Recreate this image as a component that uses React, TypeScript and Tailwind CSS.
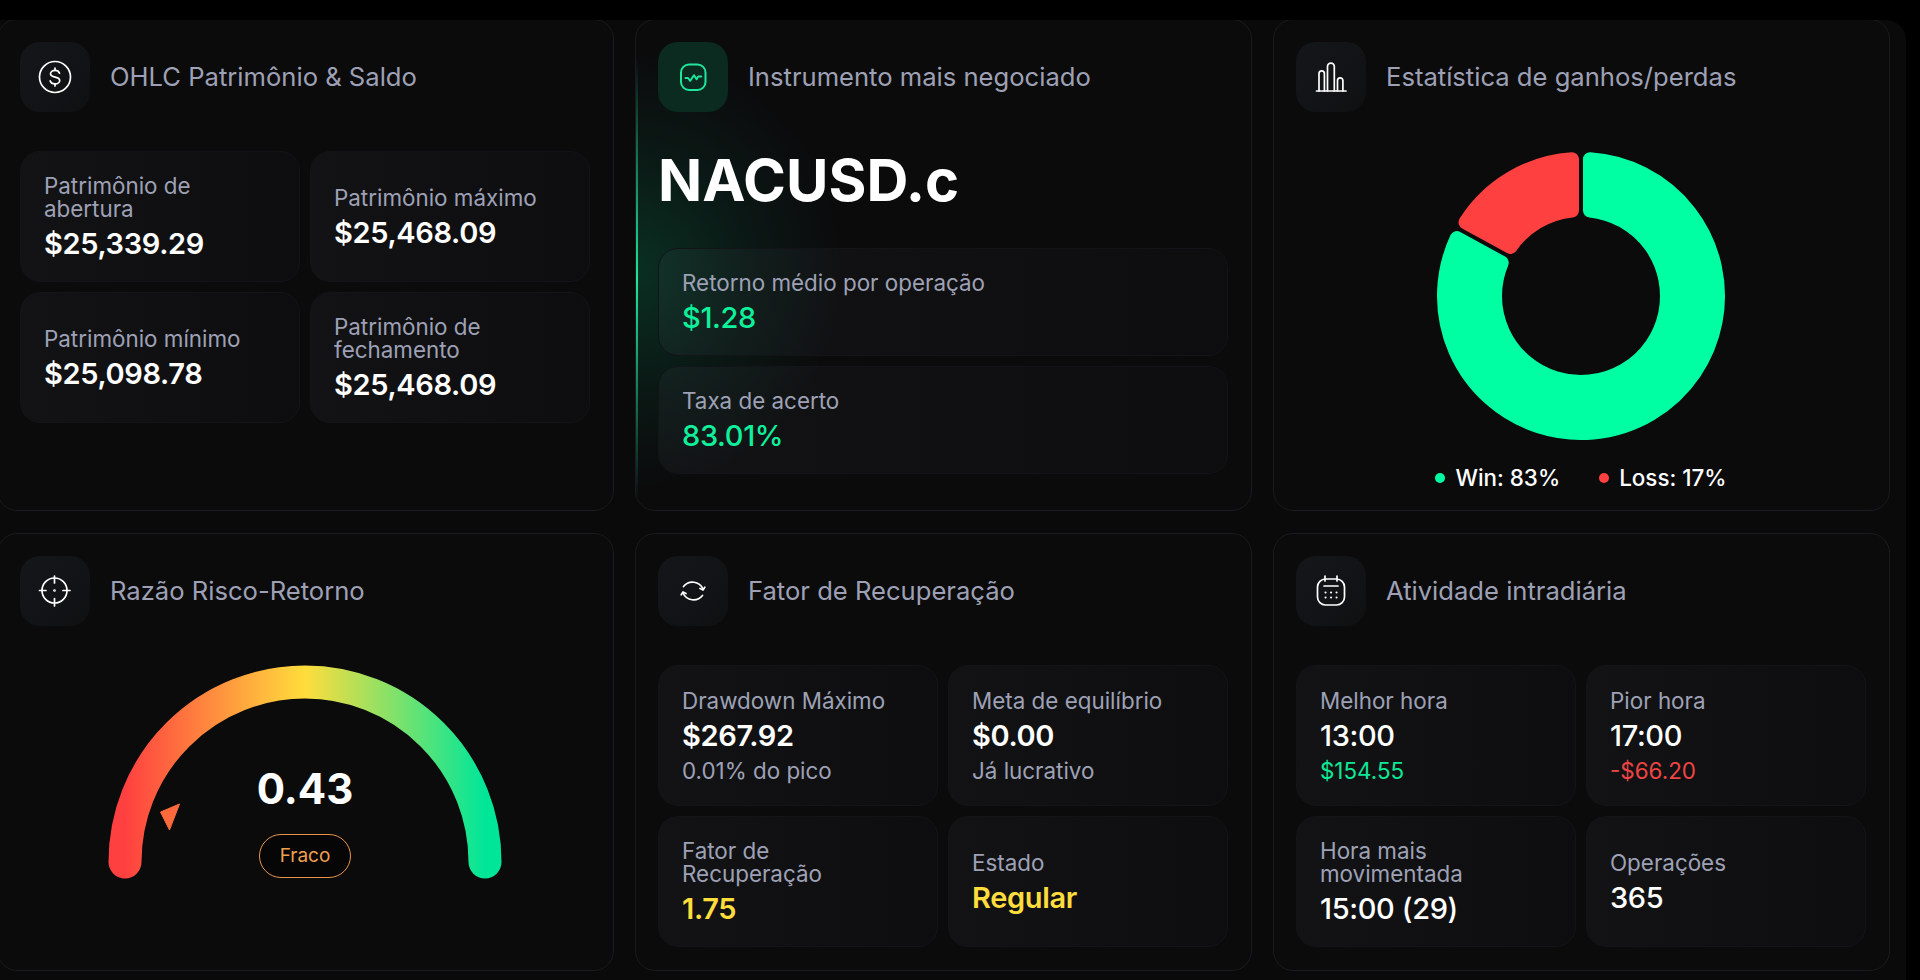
import type { ReactNode } from "react";

const FONT = "font-['Inter','Noto_Sans',sans-serif]";

function polar(r: number, deg: number) {
  const a = (deg * Math.PI) / 180;
  return `${145 + r * Math.sin(a)} ${145 - r * Math.cos(a)}`;
}

// annular slice, inset so the round stroke gives it soft corners
function slice(from: number, to: number) {
  const outer = 137;
  const inner = 86;
  const inset = 9;
  const oa = (Math.asin(inset / outer) * 180) / Math.PI;
  const ia = (Math.asin(inset / inner) * 180) / Math.PI;
  const large = to - from > 180 ? 1 : 0;
  return [
    `M ${polar(outer, from + oa)}`,
    `A ${outer} ${outer} 0 ${large} 1 ${polar(outer, to - oa)}`,
    `L ${polar(inner, to - ia)}`,
    `A ${inner} ${inner} 0 ${large} 0 ${polar(inner, from + ia)}`,
    "Z",
  ].join(" ");
}

function IconSvg({ children, color = "#ffffff" }: { children: ReactNode; color?: string }) {
  return (
    <svg
      width="70"
      height="70"
      viewBox="0 0 70 70"
      fill="none"
      stroke={color}
      strokeWidth="1.7"
      strokeLinecap="round"
      strokeLinejoin="round"
    >
      {children}
    </svg>
  );
}

function DollarIcon() {
  return (
    <IconSvg>
      <circle cx="35" cy="35" r="15.5" />
      <path d="M39.5 31.2c-.6-1.8-2.4-2.9-4.5-2.9-2.5 0-4.5 1.5-4.5 3.5 0 4.6 9.2 2.2 9.2 6.6 0 2-2 3.5-4.7 3.5-2.3 0-4.2-1.1-4.8-3" />
      <path d="M35 26v2.3M35 41.9V44" />
    </IconSvg>
  );
}

function ActivityIcon() {
  return (
    <IconSvg color="#1fe69c">
      <rect x="23" y="22.5" width="24.5" height="25.5" rx="8" strokeWidth="2" />
      <path d="M27.5 36h2.5l2.2 2.8L36 33.2l2.6 4 1.6-2.6h3" strokeWidth="2" />
    </IconSvg>
  );
}

function BarsIcon() {
  return (
    <IconSvg>
      <path d="M20.5 49h29.5" />
      <path d="M23 49V31.5a2.7 2.7 0 0 1 5.4 0V49" />
      <path d="M31.5 49V24.5a3.4 3.4 0 0 1 6.8 0V49" />
      <path d="M41.5 49V38.5a2.7 2.7 0 0 1 5.4 0V49" />
    </IconSvg>
  );
}

function TargetIcon() {
  return (
    <IconSvg>
      <circle cx="34.5" cy="34.5" r="12.5" />
      <path d="M34.5 20v7M34.5 42.5v7.5M19.5 34.5h6.5M43 34.5h7" />
      <circle cx="34.5" cy="34.5" r="0.5" />
    </IconSvg>
  );
}

function RefreshIcon() {
  return (
    <IconSvg>
      <path d="M25.5 30.5a11.5 11.5 0 0 1 19.5 2.5" />
      <path d="M44.5 39.5a11.5 11.5 0 0 1-19.5-2.5" />
      <path d="M42 32.5l3 1.5 1.8-2.8" />
      <path d="M28 37.5L25 36l-1.8 2.8" />
    </IconSvg>
  );
}

function CalendarIcon() {
  return (
    <IconSvg>
      <rect x="21.5" y="23" width="27" height="26" rx="8" />
      <path d="M29 20v5M41 20v5M28 30h14" />
      <path d="M29.5 36.5h.1M35 36.5h.1M40.5 36.5h.1M29.5 41.5h.1M35 41.5h.1M40.5 41.5h.1" strokeWidth="2" />
    </IconSvg>
  );
}

function CardHeader({ icon, title, active }: { icon: ReactNode; title: string; active?: boolean }) {
  return (
    <div className="flex items-center gap-[20px]">
      <div
        className={`h-[70px] w-[70px] shrink-0 rounded-[20px] ${
          active ? "bg-[#0b2a20]" : "bg-gradient-to-br from-[#14171a] to-[#0f1012]"
        }`}
      >
        {icon}
      </div>
      <h2 className="text-[25.6px] font-normal text-[#9ea1b5]">{title}</h2>
    </div>
  );
}

function Stat({
  label,
  value,
  note,
  valueColor = "text-white",
  noteColor = "text-[#9ea1b5]",
  valueWeight = "font-semibold",
}: {
  label: ReactNode;
  value: string;
  note?: string;
  valueColor?: string;
  noteColor?: string;
  valueWeight?: string;
}) {
  return (
    <div className="flex min-w-0 flex-col justify-center rounded-[20px] border border-[#131418] bg-gradient-to-r from-[#c8d0ff0a] to-[#c8d0ff03] px-[23px] pt-[3px]">
      <div className="text-[22.4px] leading-[23px] text-[#9ea1b5]">{label}</div>
      <div className={`mt-[5px] text-[29px] leading-[37px] tracking-[-0.35px] ${valueWeight} ${valueColor}`}>{value}</div>
      {note && <div className={`mt-[3px] text-[22.4px] leading-[28px] ${noteColor}`}>{note}</div>}
    </div>
  );
}

const cardClass = "rounded-[20px] border border-[#1a1b1e] bg-[#0b0b0c] py-[22px] pl-[22px] pr-[23px]";

function OhlcCard() {
  return (
    <section className={cardClass}>
      <CardHeader icon={<DollarIcon />} title="OHLC Patrimônio & Saldo" />
      <div className="mt-[39px] grid grid-cols-2 grid-rows-[131px_131px] gap-[10px]">
        <Stat label={<>Patrimônio de<br />abertura</>} value="$25,339.29" />
        <Stat label="Patrimônio máximo" value="$25,468.09" />
        <Stat label="Patrimônio mínimo" value="$25,098.78" />
        <Stat label={<>Patrimônio de<br />fechamento</>} value="$25,468.09" />
      </div>
    </section>
  );
}

function InstrumentCard() {
  return (
    <section className={`relative overflow-hidden ${cardClass}`}>
      {/* green glow on the left edge */}
      <div className="pointer-events-none absolute left-[-1px] top-[30px] h-[440px] w-[210px] bg-[radial-gradient(ellipse_at_left,#00ffa326_0%,#00ffa30d_40%,transparent_70%)]" />
      <div className="pointer-events-none absolute left-0 top-[40px] h-[440px] w-[2px] bg-gradient-to-b from-transparent via-[#1de598] to-transparent" />
      <div className="relative">
        <CardHeader icon={<ActivityIcon />} title="Instrumento mais negociado" active />
        <div className="mt-[33px] text-[58px] font-bold leading-[70px] text-white">NACUSD.c</div>
        <div className="mt-[33px] grid grid-rows-[108px_108px] gap-[10px]">
          <Stat label="Retorno médio por operação" value="$1.28" valueColor="text-[#0ff09c]" valueWeight="font-medium" />
          <Stat label="Taxa de acerto" value="83.01%" valueColor="text-[#0ff09c]" valueWeight="font-medium" />
        </div>
      </div>
    </section>
  );
}

function WinLossCard() {
  return (
    <section className={cardClass}>
      <CardHeader icon={<BarsIcon />} title="Estatística de ganhos/perdas" />
      <svg width="290" height="290" viewBox="0 0 290 290" className="mx-auto mt-[39px] block">
        <path d={slice(0, 298.8)} fill="#00ffa3" stroke="#00ffa3" strokeWidth="14" strokeLinejoin="round" />
        <path d={slice(298.8, 360)} fill="#ff4040" stroke="#ff4040" strokeWidth="14" strokeLinejoin="round" />
      </svg>
      <div className="mt-[25px] flex items-center justify-center gap-[39px] text-[22.4px] font-medium leading-[24px] text-white">
        <div className="flex items-center gap-[10px]">
          <span className="h-[10px] w-[10px] rounded-full bg-[#00ffa3]" />
          Win: 83%
        </div>
        <div className="flex items-center gap-[10px]">
          <span className="h-[10px] w-[10px] rounded-full bg-[#ff4040]" />
          Loss: 17%
        </div>
      </div>
    </section>
  );
}

function RiskCard() {
  return (
    <section className={cardClass}>
      <CardHeader icon={<TargetIcon />} title="Razão Risco-Retorno" />
      <div className="relative mx-auto mt-[34px] h-[225px] w-[394px]">
        <svg width="394" height="225" viewBox="0 0 394 225" fill="none">
          <defs>
            <linearGradient id="gauge" x1="0" y1="0" x2="1" y2="0">
              <stop offset="0%" stopColor="#ff4040" />
              <stop offset="50%" stopColor="#ffdd3c" />
              <stop offset="100%" stopColor="#00e699" />
            </linearGradient>
          </defs>
          <path d="M17 202 A180 180 0 0 1 377 202" stroke="url(#gauge)" strokeWidth="33" strokeLinecap="round" />
          <path d="M71.5 144 L52.5 152 L61.5 170 Z" fill="#ff6a3d" stroke="#ff6a3d" strokeWidth="1" strokeLinejoin="round" />
        </svg>
        <div className="absolute inset-x-0 top-[105px] flex flex-col items-center">
          <div className="text-[42px] font-bold leading-[48px] text-white">0.43</div>
          <div className="mt-[21px] flex h-[44px] w-[92px] items-center justify-center rounded-full border-[1.5px] border-[#e8954a] bg-[#060606] text-[19px] text-[#f0a050]">
            Fraco
          </div>
        </div>
      </div>
    </section>
  );
}

function RecoveryCard() {
  return (
    <section className={cardClass}>
      <CardHeader icon={<RefreshIcon />} title="Fator de Recuperação" />
      <div className="mt-[39px] grid grid-cols-2 grid-rows-[141px_131px] gap-[10px]">
        <Stat label="Drawdown Máximo" value="$267.92" note="0.01% do pico" />
        <Stat label="Meta de equilíbrio" value="$0.00" note="Já lucrativo" />
        <Stat label={<>Fator de<br />Recuperação</>} value="1.75" valueColor="text-[#ffdd3c]" />
        <Stat label="Estado" value="Regular" valueColor="text-[#ffdd3c]" />
      </div>
    </section>
  );
}

function IntradayCard() {
  return (
    <section className={cardClass}>
      <CardHeader icon={<CalendarIcon />} title="Atividade intradiária" />
      <div className="mt-[39px] grid grid-cols-2 grid-rows-[141px_131px] gap-[10px]">
        <Stat label="Melhor hora" value="13:00" note="$154.55" noteColor="text-[#0ee996]" valueWeight="font-medium" />
        <Stat label="Pior hora" value="17:00" note="-$66.20" noteColor="text-[#ee4444]" valueWeight="font-medium" />
        <Stat label={<>Hora mais<br />movimentada</>} value="15:00 (29)" valueWeight="font-medium" />
        <Stat label="Operações" value="365" valueWeight="font-medium" />
      </div>
    </section>
  );
}

export default function App() {
  return (
    <div className={`h-[980px] w-[1920px] overflow-hidden bg-black pt-[20px] ${FONT}`}>
      <div className="ml-[-3px] h-[960px] w-[1909px] overflow-hidden rounded-tr-[20px] bg-[#0a0a0a]">
        <div className="mt-[-1px] grid w-[1893px] grid-cols-3 grid-rows-[492px_438px] gap-x-[21px] gap-y-[22px]">
          <OhlcCard />
          <InstrumentCard />
          <WinLossCard />
          <RiskCard />
          <RecoveryCard />
          <IntradayCard />
        </div>
      </div>
    </div>
  );
}
